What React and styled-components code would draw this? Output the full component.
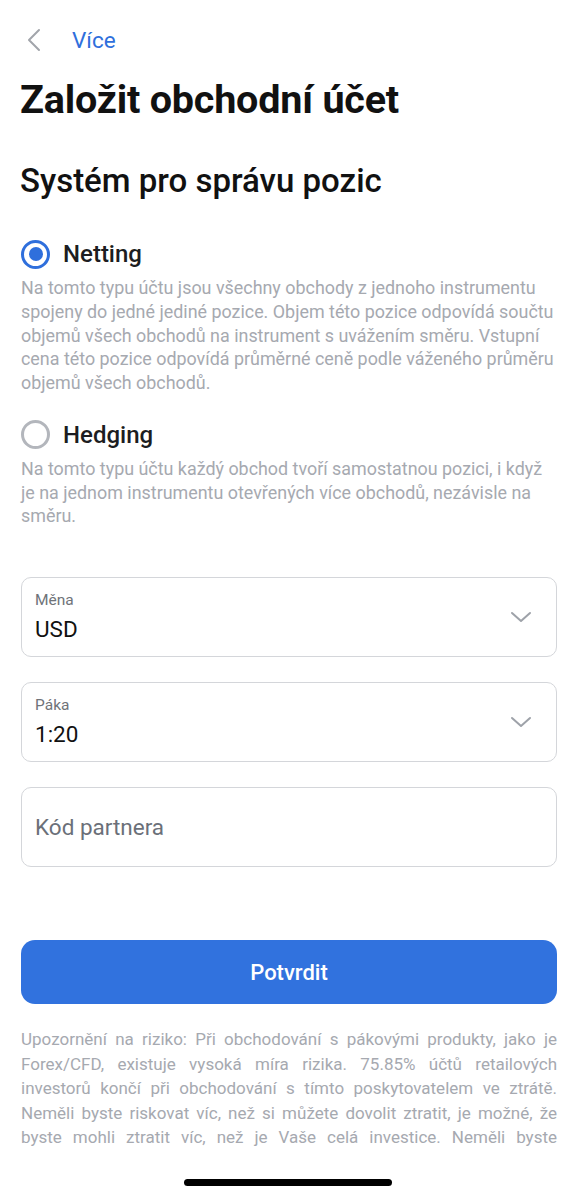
import React, { useState } from "react";
import styled, { createGlobalStyle } from "styled-components";

const GlobalStyle = createGlobalStyle`
  body {
    margin: 0;
    background: #fff;
    font-family: Roboto, "Noto Sans", sans-serif;
  }
`;

const Screen = styled.div`
  width: 576px;
  height: 1194px;
  display: flex;
  flex-direction: column;
  background: #fff;
  overflow: hidden;
`;

const Content = styled.div`
  flex: 1;
  min-height: 0;
  overflow: hidden;
  padding: 0 19px 0 21px;
`;

const NavBar = styled.div`
  display: flex;
  align-items: center;
  gap: 30px;
  height: 44px;
  padding: 18px 0 0 5px;
`;

NavBar.Back = styled.button`
  display: flex;
  align-items: center;
  justify-content: center;
  border: none;
  background: none;
  padding: 0;
  width: 16px;
  height: 24px;
  cursor: pointer;
`;

NavBar.Link = styled.a`
  color: #2f6fdc;
  font-size: 22.5px;
  text-decoration: none;
`;

const Title = styled.h1`
  margin: 15px 0 0 -1px;
  font-size: 39.5px;
  line-height: 46px;
  font-weight: 700;
  color: #111;
  letter-spacing: -0.2px;
`;

const Heading = styled.h2`
  margin: 38px 0 0 -1px;
  font-size: 33px;
  line-height: 40px;
  font-weight: 500;
  color: #111;
`;

const Options = styled.div`
  display: flex;
  flex-direction: column;
  gap: 24px;
  margin-top: 37px;
`;

const Option = styled.label`
  display: flex;
  flex-direction: column;
  gap: 6px;
  cursor: pointer;
`;

Option.Head = styled.div`
  display: flex;
  align-items: center;
  gap: 13px;
  height: 32px;
`;

Option.Name = styled.span`
  font-size: 24px;
  font-weight: 500;
  color: #1c1d21;
`;

Option.Text = styled.p`
  margin: 0;
  font-size: 17.9px;
  line-height: 23.75px;
  color: #a6a9b0;
`;

const Radio = styled.span`
  box-sizing: border-box;
  width: 29px;
  height: 29px;
  border-radius: 50%;
  border: 3px solid ${({ checked }) => (checked ? "#2f6fdc" : "#b3b6bc")};
  display: flex;
  align-items: center;
  justify-content: center;
  &::after {
    content: "";
    width: 14px;
    height: 14px;
    border-radius: 50%;
    background: #2f6fdc;
    display: ${({ checked }) => (checked ? "block" : "none")};
  }
`;

const Fields = styled.div`
  display: flex;
  flex-direction: column;
  gap: 25px;
  margin-top: 49px;
`;

const Field = styled.div`
  box-sizing: border-box;
  height: 80px;
  border: 1.5px solid #d4d6da;
  border-radius: 10px;
  display: flex;
  align-items: center;
  padding: 0 24px 0 13px;
`;

Field.Body = styled.div`
  flex: 1;
  display: flex;
  flex-direction: column;
  gap: 4px;
`;

Field.Label = styled.span`
  font-size: 15.5px;
  line-height: 20px;
  color: #6f7379;
`;

Field.Value = styled.span`
  font-size: 22.5px;
  line-height: 30px;
  color: #111;
`;

Field.Placeholder = styled.span`
  font-size: 22.5px;
  color: #6b7079;
`;

const Button = styled.button`
  display: block;
  width: 100%;
  height: 64px;
  margin-top: 73px;
  border: none;
  border-radius: 14px;
  background: #3172de;
  color: #fff;
  font-family: inherit;
  font-size: 22px;
  font-weight: 500;
  cursor: pointer;
`;

const Disclaimer = styled.p`
  margin: 23px 0 0;
  font-size: 17px;
  line-height: 24.5px;
  color: #a6a9b0;
  text-align: justify;
`;

const HomeBar = styled.div`
  height: 45px;
  display: flex;
  justify-content: center;
  align-items: flex-end;
  padding-bottom: 8px;
  box-sizing: border-box;
  flex-shrink: 0;
  &::after {
    content: "";
    width: 208px;
    height: 7px;
    border-radius: 4px;
    background: #000;
  }
`;

const Chevron = ({ dir, color }) =>
  dir === "left" ? (
    <svg width="14" height="24" viewBox="0 0 14 24" fill="none">
      <polyline points="12,2 2,12 12,22" stroke={color} strokeWidth="2" strokeLinecap="round" strokeLinejoin="round" />
    </svg>
  ) : (
    <svg width="22" height="12" viewBox="0 0 22 12" fill="none">
      <polyline points="2,2 11,10 20,2" stroke={color} strokeWidth="2" strokeLinecap="round" strokeLinejoin="round" />
    </svg>
  );

const options = [
  {
    id: "netting",
    name: "Netting",
    text: "Na tomto typu účtu jsou všechny obchody z jednoho instrumentu spojeny do jedné jediné pozice. Objem této pozice odpovídá součtu objemů všech obchodů na instrument s uvážením směru. Vstupní cena této pozice odpovídá průměrné ceně podle váženého průměru objemů všech obchodů.",
  },
  {
    id: "hedging",
    name: "Hedging",
    text: "Na tomto typu účtu každý obchod tvoří samostatnou pozici, i když je na jednom instrumentu otevřených více obchodů, nezávisle na směru.",
  },
];

export default function App() {
  const [mode, setMode] = useState("netting");
  return (
    <Screen>
      <GlobalStyle />
      <Content>
        <NavBar>
          <NavBar.Back>
            <Chevron dir="left" color="#a2a5ab" />
          </NavBar.Back>
          <NavBar.Link href="#">Více</NavBar.Link>
        </NavBar>
        <Title>Založit obchodní účet</Title>
        <Heading>Systém pro správu pozic</Heading>
        <Options>
          {options.map((o) => (
            <Option key={o.id} onClick={() => setMode(o.id)}>
              <Option.Head>
                <Radio checked={mode === o.id} />
                <Option.Name>{o.name}</Option.Name>
              </Option.Head>
              <Option.Text>{o.text}</Option.Text>
            </Option>
          ))}
        </Options>
        <Fields>
          <Field>
            <Field.Body>
              <Field.Label>Měna</Field.Label>
              <Field.Value>USD</Field.Value>
            </Field.Body>
            <Chevron color="#9ea2a9" />
          </Field>
          <Field>
            <Field.Body>
              <Field.Label>Páka</Field.Label>
              <Field.Value>1:20</Field.Value>
            </Field.Body>
            <Chevron color="#9ea2a9" />
          </Field>
          <Field>
            <Field.Placeholder>Kód partnera</Field.Placeholder>
          </Field>
        </Fields>
        <Button>Potvrdit</Button>
        <Disclaimer>
          Upozornění na riziko: Při obchodování s pákovými produkty, jako je Forex/CFD, existuje vysoká míra rizika. 75.85% účtů retailových investorů končí při obchodování s tímto poskytovatelem ve ztrátě. Neměli byste riskovat víc, než si můžete dovolit ztratit, je možné, že byste mohli ztratit víc, než je Vaše celá investice. Neměli byste investovat peníze, které si nemůžete dovolit ztratit.
        </Disclaimer>
      </Content>
      <HomeBar />
    </Screen>
  );
}
